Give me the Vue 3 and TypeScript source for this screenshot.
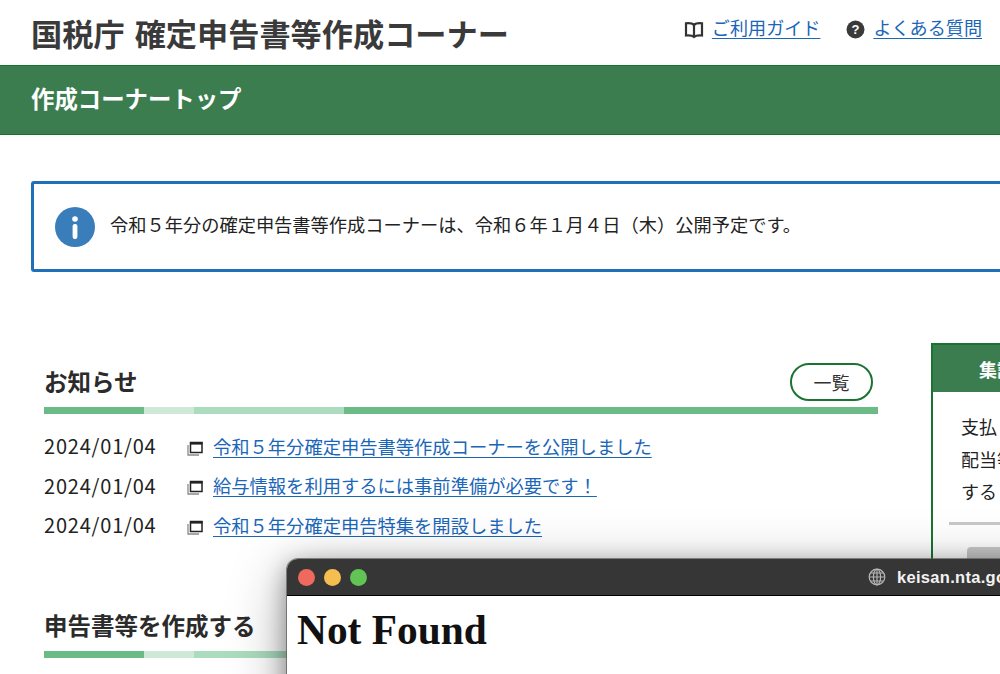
<script setup lang="ts">
const news: string[] = [
  '令和５年分確定申告書等作成コーナーを公開しました',
  '給与情報を利用するには事前準備が必要です！',
  '令和５年分確定申告特集を開設しました',
]
</script>

<template>
  <div class="page">
    <header class="top">
      <h1 class="site">国税庁 確定申告書等作成コーナー</h1>
      <nav class="tools">
        <span class="tool">
          <svg class="ic" width="20" height="18" viewBox="0 0 20 18" fill="none" stroke="#333" stroke-width="2.200">
            <path d="M10 4C8.500 2.400 5.500 2 2 2.300V14.500C5.500 14.200 8.500 14.500 10 16C11.500 14.500 14.500 14.200 18 14.500V2.300C14.500 2 11.500 2.400 10 4Z" />
            <path d="M10 4V16" />
          </svg>
          <a href="#">ご利用ガイド</a>
        </span>
        <span class="tool">
          <svg class="ic" width="19" height="19" viewBox="0 0 19 19">
            <circle cx="9.500" cy="9.500" r="9" fill="#3a3a3a" />
            <text x="9.500" y="14" text-anchor="middle" font-size="13" font-weight="700" fill="#fff" font-family="Liberation Sans, sans-serif">?</text>
          </svg>
          <a href="#">よくある質問</a>
        </span>
      </nav>
    </header>

    <div class="band"><span>作成コーナートップ</span></div>

    <div class="notice">
      <svg width="40" height="40" viewBox="0 0 40 40">
        <circle cx="20" cy="20" r="20" fill="#3a7dbb" />
        <circle cx="20" cy="12" r="2.800" fill="#fff" />
        <rect x="17.600" y="17" width="4.800" height="15" rx="2.200" fill="#fff" />
      </svg>
      <p>令和５年分の確定申告書等作成コーナーは、令和６年１月４日（木）公開予定です。</p>
    </div>

    <div class="columns">
      <main class="main">
        <section>
          <div class="sec-head">
            <h2>お知らせ</h2>
            <a class="pill">一覧</a>
          </div>
          <div class="rule"><i class="s1"></i><i class="s2"></i><i class="s3"></i><i class="s4"></i></div>
          <ul class="news">
            <li v-for="item in news" :key="item">
              <span class="date">2024/01/04</span>
              <svg class="ic-win" width="16" height="16" viewBox="0 0 16 16" fill="none">
                <path d="M1 5V15H12" stroke="#8a8a8a" stroke-width="1.300" />
                <rect x="3.500" y="2.500" width="11.500" height="10" fill="#fff" stroke="#222" stroke-width="1.500" />
                <rect x="3" y="2" width="12.500" height="2.600" fill="#222" />
              </svg>
              <a href="#">{{ item }}</a>
            </li>
          </ul>
        </section>
        <section class="second">
          <div class="sec-head">
            <h2>申告書等を作成する</h2>
          </div>
          <div class="rule"><i class="s1"></i><i class="s2"></i><i class="s3"></i><i class="s4"></i></div>
        </section>
      </main>

      <aside class="side">
        <div class="side-head">集計</div>
        <div class="side-body">
          <p>支払</p>
          <p>配当等</p>
          <p>する</p>
          <hr />
          <div class="side-btn"></div>
        </div>
      </aside>
    </div>

    <div class="window">
      <div class="titlebar">
        <span class="dot red"></span>
        <span class="dot yellow"></span>
        <span class="dot green"></span>
        <span class="address">
          <svg width="18" height="18" viewBox="0 0 18 18" fill="none" stroke="#b5b5b5" stroke-width="1.200">
            <circle cx="9" cy="9" r="7.800" />
            <ellipse cx="9" cy="9" rx="3.600" ry="7.800" />
            <path d="M9 1.200V16.800M1.200 9H16.800M2.300 5H15.700M2.300 13H15.700" />
          </svg>
          <span>keisan.nta.go.jp</span>
        </span>
      </div>
      <div class="win-body"><h1>Not Found</h1></div>
    </div>
  </div>
</template>

<style>
html, body { margin: 0; overflow: hidden; background: #fff; }
</style>

<style scoped>
.page {
  position: relative;
  width: 1000px;
  height: 674px;
  overflow: hidden;
  background: #fff;
  color: #222;
  font-family: "Noto Sans CJK JP", "Noto Sans", sans-serif;
}
.top {
  height: 65px;
  width: 982px;
  padding-left: 31px;
  box-sizing: border-box;
  display: flex;
  align-items: center;
  justify-content: space-between;
}
.site {
  margin: 0;
  font-size: 31.200px;
  font-weight: 700;
  word-spacing: 3px;
  line-height: 1;
  color: #3a3a3a;
  white-space: nowrap;
}
.tools { display: flex; gap: 26px; align-items: center; height: 60px; margin-top: -10px; }
.tool { display: flex; align-items: center; gap: 8px; }
.ic { margin-top: 4px; }
a { color: #1a66b8; text-decoration: underline; text-underline-offset: 3px; }
.tool a { font-size: 18.100px; line-height: 1; }
.band {
  height: 70px;
  box-sizing: border-box;
  border-top: 1px solid #1a7431;
  border-bottom: 1px solid #1a7431;
  background: #3c7d50;
  color: #fff;
  font-size: 23.400px;
  font-weight: 700;
  padding: 0 0 4px 31px;
  display: flex;
  align-items: center;
}
.notice {
  margin: 46px 0 0 31px;
  width: 1100px;
  height: 91px;
  box-sizing: border-box;
  border: 3px solid #1f70b9;
  border-radius: 3px;
  display: flex;
  align-items: center;
  gap: 15px;
  padding-left: 21px;
}
.notice p { margin: 0 0 6px; font-size: 18.240px; color: #222; white-space: nowrap; }
.columns {
  display: flex;
  align-items: flex-start;
  margin: 71px 0 0 44px;
  gap: 53px;
  width: 1240px;
}
.main { width: 834px; flex: none; padding-top: 17px; }
.sec-head {
  height: 44px;
  margin-bottom: 3px;
  display: flex;
  align-items: center;
  justify-content: space-between;
  padding-right: 5px;
}
.sec-head h2 { margin: 0; font-size: 23.500px; font-weight: 700; line-height: 1; color: #2b2b2b; }
.pill {
  width: 83px;
  height: 38px;
  box-sizing: border-box;
  border: 2px solid #1a7431;
  border-radius: 19px;
  display: flex;
  align-items: center;
  justify-content: center;
  color: #333;
  font-size: 18px;
  text-decoration: none;
}
.rule { display: flex; height: 7px; }
.rule i { display: block; }
.s1 { width: 100px; background: #6cbb86; }
.s2 { width: 50px; background: #cfe9d8; }
.s3 { width: 150px; background: #acdcbe; }
.s4 { flex: 1; background: #6cbb86; }
.news { list-style: none; margin: 12px 0 0; padding: 0; }
.news li { display: flex; align-items: center; height: 39.500px; white-space: nowrap; }
.date { width: 143px; font-size: 20px; letter-spacing: .8px; color: #222; }
.ic-win { margin-right: 10px; position: relative; top: 2px; }
.news a { font-size: 18.300px; line-height: 1; }
.second { margin-top: 59.500px; }
.side {
  width: 300px;
  flex: none;
  box-sizing: border-box;
  border: 2px solid #1a7431;
  border-bottom: none;
  height: 300px;
}
.side-head {
  height: 47px;
  background: #3c7d50;
  color: #fff;
  font-weight: 700;
  font-size: 18px;
  display: flex;
  align-items: center;
  padding-left: 46px;
}
.side-body { padding: 18px 0 0 16px; }
.side-body p { margin: 0 0 0 12px; font-size: 18px; line-height: 32.500px; white-space: nowrap; color: #222; }
.side-body hr { border: none; height: 3px; background: #c9c9c9; margin: 14px 0 0; }
.side-btn { height: 60px; width: 200px; margin: 22px 0 0 18px; background: #c9c9c9; border-radius: 4px; }
.window {
  position: absolute;
  left: 287px;
  top: 559px;
  width: 900px;
  height: 300px;
  border-radius: 11px 11px 0 0;
  background: #fff;
  box-shadow: 0 0 0 1px rgba(90, 90, 90, .7), 0 6px 24px rgba(0, 0, 0, .38), 0 14px 60px rgba(0, 0, 0, .32);
}
.titlebar {
  height: 37px;
  box-sizing: border-box;
  background: #363636;
  border-bottom: 1px solid #000;
  border-radius: 11px 11px 0 0;
  display: flex;
  align-items: center;
  padding-left: 11px;
  gap: 9px;
}
.dot { width: 17px; height: 17px; border-radius: 50%; }
.red { background: #ee6a5f; }
.yellow { background: #f5be4f; }
.green { background: #61c454; }
.address {
  margin-left: 492px;
  display: flex;
  align-items: center;
  gap: 11px;
  color: #f2f2f2;
  font-family: "Liberation Sans", sans-serif;
  font-weight: 700;
  font-size: 16.500px;
  letter-spacing: .3px;
}
.win-body { padding: 11px 10px; }
.win-body h1 {
  margin: 0;
  font-family: "Liberation Serif", serif;
  font-size: 41.400px;
  font-weight: 700;
  color: #111;
  line-height: 46px;
}
</style>
